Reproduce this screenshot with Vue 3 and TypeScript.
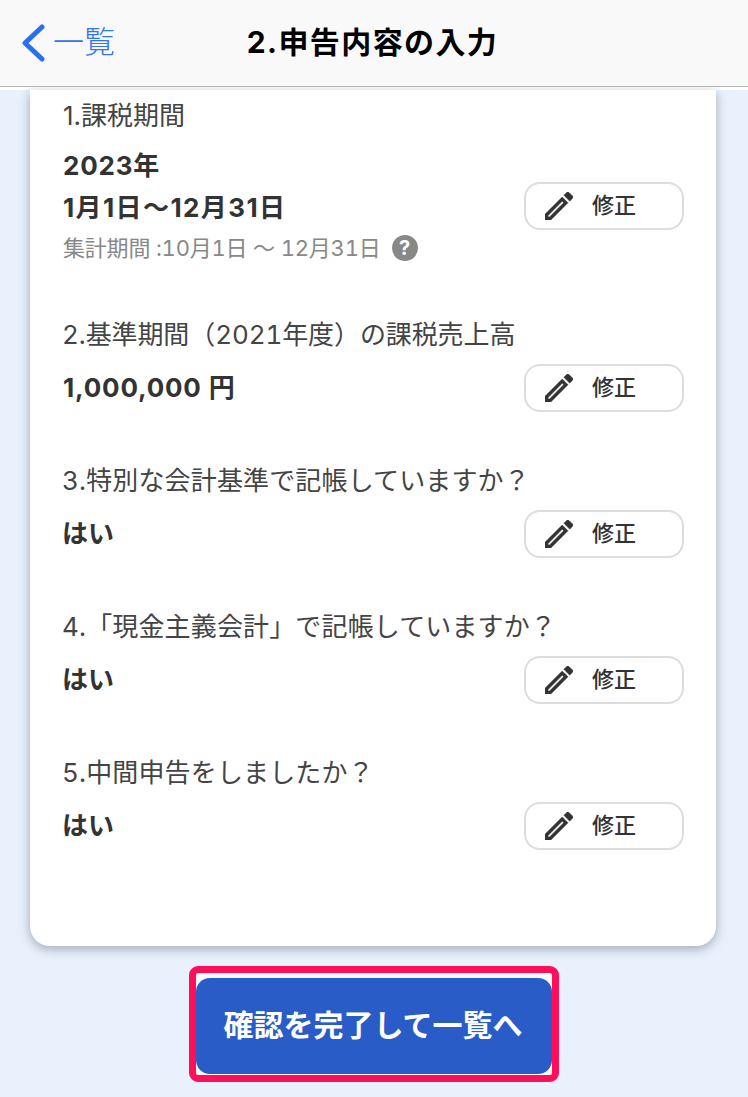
<script setup lang="ts">
interface Row { label: string; value: string; plain: boolean }
const rows: Row[] = [
  { label: '2.基準期間（2021年度）の課税売上高', value: '1,000,000 円', plain: false },
  { label: '3.特別な会計基準で記帳していますか？', value: 'はい', plain: true },
  { label: '4.「現金主義会計」で記帳していますか？', value: 'はい', plain: true },
  { label: '5.中間申告をしましたか？', value: 'はい', plain: true },
]
const pencil = 'M14.06 9.02l.92.92L5.92 19H5v-.92l9.06-9.06M17.66 3c-.25 0-.51.1-.7.29l-1.83 1.83 3.75 3.75 1.83-1.83c.39-.39.39-1.02 0-1.41l-2.34-2.34c-.2-.2-.45-.29-.71-.29zm-3.6 3.19L3 17.25V21h3.75L17.81 9.94l-3.75-3.75z'
</script>

<template>
  <div class="page">
    <header class="bar">
      <div class="back">
        <svg class="chev" viewBox="0 0 24 38" width="24" height="38">
          <path d="M21 3 L4 19 L21 35" fill="none" stroke="#2a6ff0" stroke-width="5" stroke-linecap="round" stroke-linejoin="round" />
        </svg>
        <span class="back-text">一覧</span>
      </div>
      <h1 class="title">2.申告内容の入力</h1>
    </header>
    <div class="strip"></div>
    <main class="card">
      <section class="row first">
        <div class="label">1.課税期間</div>
        <div class="line">
          <div>
            <div class="value">2023年</div>
            <div class="value date">1月1日〜12月31日</div>
            <div class="sub">
              <span>集計期間 :10月1日 〜 12月31日</span>
              <span class="help">?</span>
            </div>
          </div>
          <button class="edit">
            <svg viewBox="3 3 18 18" width="28" height="28"><path :d="pencil" fill="#333" stroke="#333" stroke-width="0.3" /></svg>
            <span class="edit-text">修正</span>
          </button>
        </div>
      </section>
      <section v-for="r in rows" :key="r.label" class="row">
        <div class="label">{{ r.label }}</div>
        <div class="line">
          <div class="value" :class="{ plain: r.plain }">{{ r.value }}</div>
          <button class="edit">
            <svg viewBox="3 3 18 18" width="28" height="28"><path :d="pencil" fill="#333" stroke="#333" stroke-width="0.3" /></svg>
            <span class="edit-text">修正</span>
          </button>
        </div>
      </section>
    </main>
    <div class="cta-wrap">
      <div class="mark">
        <button class="cta">確認を完了して一覧へ</button>
      </div>
    </div>
  </div>
</template>

<style scoped>
.page {
  width: 748px;
  height: 1097px;
  overflow: hidden;
  background: #e9f1fd;
  font-family: Inter, "Noto Sans CJK JP", sans-serif;
  color: #333;
}
.bar {
  position: relative;
  height: 86px;
  background: #faf9f9;
  border-bottom: 1px solid #b4b4b4;
  display: flex;
  align-items: center;
  justify-content: center;
}
.back {
  position: absolute;
  left: 21px;
  top: 23px;
  display: flex;
  align-items: center;
  gap: 8px;
}
.chev { display: block; }
.back-text {
  font-size: 31px;
  line-height: 38px;
  font-weight: 300;
  color: #3274ee;
  margin-bottom: 2px;
}
.title {
  margin: 0 3px 7px 0;
  font-size: 30px;
  font-weight: 700;
  color: #000;
  letter-spacing: 1.4px;
}
.strip { height: 3px; background: #fff; }
.card {
  margin: 0 32px 0 30px;
  background: #fff;
  border-radius: 0 0 20px 20px;
  box-shadow: 0 3px 11px rgba(50, 60, 80, 0.4);
  padding: 8px 32px 96px 33px;
  height: 856px;
  box-sizing: border-box;
}
.row { margin-top: 51px; }
.row.first { margin-top: 0; margin-bottom: -1px; }
.label {
  font-size: 26px;
  line-height: 36px;
  color: #444;
  margin-left: -1px;
  letter-spacing: 0.15px;
  font-variant-numeric: tabular-nums;
}
.first .label { font-variant-numeric: normal; letter-spacing: 0; margin-left: 0; }
.row:nth-of-type(2) .label { letter-spacing: -0.1px; }
.line {
  margin-top: 11px;
  display: flex;
  align-items: center;
  justify-content: space-between;
}
.value {
  font-size: 26px;
  line-height: 42px;
  font-weight: 700;
  color: #333;
  letter-spacing: 0.8px;
}
.value.date { letter-spacing: 1.4px; }
.value.plain { letter-spacing: 0; margin-left: -1px; }
.sub {
  display: flex;
  align-items: center;
  gap: 11px;
  font-size: 22px;
  line-height: 38px;
  color: #888;
  letter-spacing: -0.2px;
  font-variant-numeric: tabular-nums;
}
.help {
  width: 26px;
  height: 26px;
  border-radius: 50%;
  background: #888;
  color: #fff;
  font-size: 20px;
  line-height: 26px;
  font-weight: 700;
  text-align: center;
}
.edit {
  width: 160px;
  height: 48px;
  box-sizing: border-box;
  border: 2px solid #ddd;
  border-radius: 16px;
  background: #fff;
  display: flex;
  align-items: center;
  padding: 0 0 0 19px;
  gap: 19px;
  font-family: inherit;
  font-size: 22px;
  font-weight: 500;
  color: #333;
}
.edit-text { margin-bottom: 6px; }
.cta-wrap {
  display: flex;
  justify-content: center;
  margin-top: 20px;
}
.mark {
  width: 370px;
  height: 116px;
  box-sizing: border-box;
  border: 7px solid #ff0f5a;
  border-radius: 9px;
  padding: 5px 0 0;
  background: #f8faff;
}
.cta {
  display: block;
  width: 356px;
  height: 96px;
  margin: 0;
  padding: 0 2px 6px 0;
  border: 0;
  border-radius: 14px;
  background: #2a5cc8;
  color: #fff;
  font-family: inherit;
  font-size: 30px;
  font-weight: 600;
}
</style>
